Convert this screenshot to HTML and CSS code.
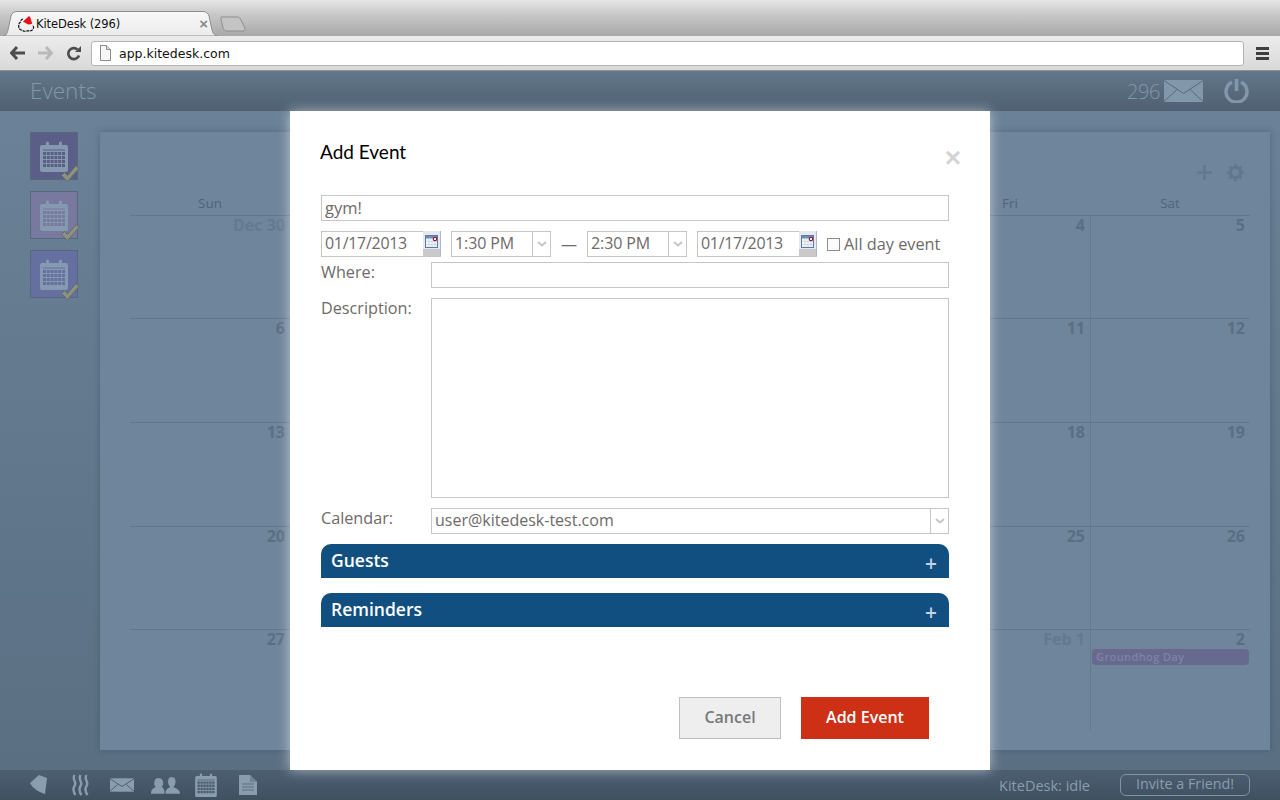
FILE: index.html
```html
<!DOCTYPE html>
<html lang="en">
<head>
<meta charset="utf-8">
<title>KiteDesk (296)</title>
<link rel="stylesheet" href="styles.css">
</head>
<body>
<svg class="defs" width="0" height="0" aria-hidden="true">
  <symbol id="cal" viewBox="0 0 28 31">
    <path d="M2 4h4V2a1.500 1.500 0 0 1 3 0v2h10V2a1.500 1.500 0 0 1 3 0v2h4a2 2 0 0 1 2 2v23a2 2 0 0 1-2 2H2a2 2 0 0 1-2-2V6a2 2 0 0 1 2-2z" fill="currentColor"/>
    <path d="M3 9h22" stroke="var(--cell)" stroke-width="1"/>
    <path d="M3 12.500h22M3 16.500h22M3 20.500h22M3 24.500h22" stroke="var(--cell)" stroke-width="3" stroke-dasharray="3 .8"/>
  </symbol>
  <symbol id="chk" viewBox="0 0 20 20">
    <path d="M1.500 12.500l3-3 3 3L16 2.500l3 3L7.500 18.500z" fill="#8f9279" stroke="#5a6b7c" stroke-width="1"/>
  </symbol>
  <symbol id="chev" viewBox="0 0 10 6">
    <path d="M1 1l4 3.500L9 1" fill="none" stroke="#c4c4c4" stroke-width="1.800"/>
  </symbol>
  <symbol id="pick" viewBox="0 0 18 25">
    <rect width="18" height="25" fill="#c9c9cb"/>
    <rect width="17" height="18" fill="#e6e9f0"/>
    <rect x="17" width="1" height="25" fill="#a9b6cc"/>
    <rect x="2.500" y="4.500" width="12" height="12" fill="#f3f5f9" stroke="#5c7aa6"/>
    <rect x="3" y="5" width="11" height="2.500" fill="#6f8db8"/>
    <path d="M6 8v8M9 8v8M12 8v8M3 10.500h11M3 13.500h11" stroke="#c9d2e0" stroke-width=".7"/>
    <circle cx="12" cy="8" r="1.700" fill="#fff" stroke="#8b1020" stroke-width="1.100"/>
  </symbol>
</svg>

<header class="tabstrip">
  <div class="tab">
    <svg class="tab-shape" width="216" height="25" viewBox="0 0 216 25"><path d="M0 25c3 0 4-2 5-6l3-14c1-3 3-4.500 6-4.500h186c3 0 5 1.500 6 4.500l3 14c1 4 3 6 6 6z" fill="url(#tabfill)" stroke="#8f8f8f"/><defs><linearGradient id="tabfill" x1="0" y1="0" x2="0" y2="1"><stop offset="0" stop-color="#f7f7f7"/><stop offset="1" stop-color="#ececec"/></linearGradient></defs></svg>
    <svg class="favicon" width="17" height="16" viewBox="0 0 17 16"><path d="M5 3C3 3.500 2.500 5 2.500 6 1 7 .5 8.500 .8 10c-.3 2 1 4 3 4.200 2 1.300 4 1.300 6 .5 2 .5 4 .2 5.200-1.500 1-1.500.7-3-.3-4" fill="none" stroke="#111" stroke-width="1.200" stroke-dasharray="3 .8"/><path d="M5 5.500L11 0c1.500 1 2.500 4 3 8l-4 .5z" fill="#e8101c"/></svg>
    <span class="tab-title">KiteDesk (296)</span>
    <span class="tab-close">×</span>
  </div>
  <svg class="newtab" width="26" height="16" viewBox="0 0 26 16"><path d="M1 1h16c2 0 3 1 4 3l4 8c.5 2-.5 3-2 3H7c-2 0-3-1-4-3L1 3c-.500-1 0-2 0-2z" fill="#c4c4c4" stroke="#8f8f8f"/></svg>
</header>

<nav class="toolbar">
  <svg class="nav-ico" width="15" height="14" viewBox="0 0 15 14"><path d="M7 1L1.500 7 7 13M2 7h13" fill="none" stroke="#4c4c4c" stroke-width="3"/></svg>
  <svg class="nav-ico" width="15" height="14" viewBox="0 0 15 14"><path d="M8 1l5.500 6L8 13M13 7H0" fill="none" stroke="#b9b9b9" stroke-width="3"/></svg>
  <svg class="nav-ico reload" width="16" height="15" viewBox="0 0 15 15"><path d="M12.500 9.500A5.500 5.500 0 1 1 11 3.500" fill="none" stroke="#4c4c4c" stroke-width="2.600"/><path d="M8.500 6h6V0z" fill="#4c4c4c"/></svg>
  <div class="omnibox">
    <svg width="11" height="16" viewBox="0 0 11 16"><path d="M.5.500h6l4 4v11H.500z" fill="#f6f6f6" stroke="#8a8a8a"/><path d="M6.500.500v4h4" fill="#ddd" stroke="#8a8a8a"/></svg>
    <span class="url">app.kitedesk.com</span>
  </div>
  <div class="menu"><i></i><i></i><i></i></div>
</nav>

<header class="apphead">
  <h1 class="apptitle">Events</h1>
  <div class="counts">
    <span class="count">296</span>
    <svg width="39" height="22" viewBox="0 0 39 22"><path d="M0 0h39v22H0z" fill="#8297aa"/><path d="M0 .5l19.500 13L39 .5M0 21.500l13-12M39 21.500l-13-12" fill="none" stroke="#566b7e" stroke-width="1"/></svg>
    <svg class="power" width="25" height="25" viewBox="0 0 25 25"><path d="M8 4.200a10.500 10.500 0 1 0 9 0" fill="none" stroke="#8297aa" stroke-width="3.500"/><path d="M12.500 1v12" stroke="#8297aa" stroke-width="3.600"/></svg>
  </div>
</header>

<main class="main">
  <aside class="side">
    <div class="tile t1"><svg class="tile-cal" width="28" height="31"><use href="#cal"/></svg><svg class="tile-chk" width="20" height="20"><use href="#chk"/></svg></div>
    <div class="tile t2"><svg class="tile-cal" width="28" height="31"><use href="#cal"/></svg><svg class="tile-chk" width="20" height="20"><use href="#chk"/></svg></div>
    <div class="tile t3"><svg class="tile-cal" width="28" height="31"><use href="#cal"/></svg><svg class="tile-chk" width="20" height="20"><use href="#chk"/></svg></div>
  </aside>
  <section class="card">
    <div class="card-tools">
      <svg width="15" height="15" viewBox="0 0 16 16"><path d="M8 0v16M0 8h16" stroke="#62778c" stroke-width="2.400"/></svg>
      <svg width="17" height="17" viewBox="0 0 17 17"><circle cx="8.500" cy="8.500" r="5" fill="none" stroke="#62778c" stroke-width="3.200"/><path d="M8.500 0v17M0 8.500h17M2.500 2.500l12 12M14.500 2.500l-12 12" stroke="#62778c" stroke-width="2.600" stroke-dasharray="3 11"/></svg>
    </div>
    <div class="cal">
      <div class="dow">Sun</div><div class="dow"></div><div class="dow"></div><div class="dow"></div><div class="dow"></div><div class="dow">Fri</div><div class="dow">Sat</div>
      <div class="day off">Dec 30</div><div class="day"></div><div class="day"></div><div class="day"></div><div class="day"></div><div class="day">4</div><div class="day sat">5</div>
      <div class="day">6</div><div class="day"></div><div class="day"></div><div class="day"></div><div class="day"></div><div class="day">11</div><div class="day sat">12</div>
      <div class="day">13</div><div class="day"></div><div class="day"></div><div class="day"></div><div class="day"></div><div class="day">18</div><div class="day sat">19</div>
      <div class="day">20</div><div class="day"></div><div class="day"></div><div class="day"></div><div class="day"></div><div class="day">25</div><div class="day sat">26</div>
      <div class="day last">27</div><div class="day last"></div><div class="day last"></div><div class="day last"></div><div class="day last"></div><div class="day last off">Feb 1</div><div class="day last sat">2<div class="evt">Groundhog Day</div></div>
    </div>
  </section>
</main>

<footer class="appfoot">
  <div class="foot-icons">
    <svg width="18" height="20" viewBox="0 0 18 20"><path d="M0 8L9 0l8 3-2 16C9 17 3 14 0 8z" fill="#8a9dae"/></svg>
    <svg class="waves" width="18" height="22" viewBox="0 0 18 22"><path d="M2.500 1c-3 5 3 7 0 11-2 3-1 6 1 9M8.500 1c-3 5 3 7 0 11-2 3-1 6 1 9M14.500 1c-3 5 3 7 0 11-2 3-1 6 1 9" fill="none" stroke="#8a9dae" stroke-width="2.400"/></svg>
    <svg class="f-mail" width="24" height="14" viewBox="0 0 25 14"><path d="M0 0h25v14H0z" fill="#8a9dae"/><path d="M0 .5l12.500 8L25 .5M0 13.500l8-7M25 13.500l-8-7" fill="none" stroke="#4a5d6e"/></svg>
    <svg class="f-ppl" width="29" height="20" viewBox="0 0 30 20"><path d="M0 19c0-5 3-6 5-7-2-2-2-3-1-7 1-3 6-3 8 0 1 3 1 5-1 7 2 1 3 2 3 7z" fill="#8a9dae"/><path d="M15 19c0-4 1-5 5-7-2-2-3-4-2-8 1-3 6-3 7 0 1 4 0 6-2 8 4 2 7 3 7 7z" fill="#8a9dae"/></svg>
    <svg class="f-cal" width="22" height="24"><use href="#cal"/></svg>
    <svg class="f-doc" width="18" height="20" viewBox="0 0 18 20"><path d="M0 0h11l7 7v13H0z" fill="#8a9dae"/><path d="M11 0v7h7" fill="#6f8497"/><path d="M3 9h12M3 12h12M3 15h12" stroke="#5a6d7f"/></svg>
  </div>
  <span class="status">KiteDesk: idle</span>
  <span class="invite">Invite a Friend!</span>
</footer>

<div class="modal">
  <div class="modal-head">
    <h2 class="modal-title">Add Event</h2>
    <span class="modal-x">×</span>
  </div>
  <div class="field title-field">gym!</div>
  <div class="when">
    <div class="field date">01/17/2013<svg class="pick" width="18" height="25"><use href="#pick"/></svg></div>
    <div class="field time">1:30 PM<span class="arrow"><svg width="10" height="6"><use href="#chev"/></svg></span></div>
    <span class="dash">—</span>
    <div class="field time">2:30 PM<span class="arrow"><svg width="10" height="6"><use href="#chev"/></svg></span></div>
    <div class="field date">01/17/2013<svg class="pick" width="18" height="25"><use href="#pick"/></svg></div>
    <span class="check"></span>
    <span class="allday">All day event</span>
  </div>
  <div class="row where"><span class="lbl">Where:</span><div class="field grow"></div></div>
  <div class="row desc"><span class="lbl">Description:</span><div class="field grow area"></div></div>
  <div class="row calrow"><span class="lbl">Calendar:</span><div class="field grow">user@kitedesk-test.com<span class="arrow"><svg width="10" height="6"><use href="#chev"/></svg></span></div></div>
  <div class="bar">Guests<span class="plus">+</span></div>
  <div class="bar">Reminders<span class="plus">+</span></div>
  <div class="actions">
    <button class="btn cancel">Cancel</button>
    <button class="btn add">Add Event</button>
  </div>
</div>
</body>
</html>
```
FILE: styles.css
```css
* { box-sizing: border-box; }
html, body { margin: 0; height: 800px; overflow: hidden; }
body { display: flex; flex-direction: column; font-family: "Open Sans", "Noto Sans", sans-serif; background: #5c7185; }
.defs { position: absolute; }

.tabstrip { height: 36px; flex: none; display: flex; align-items: flex-end; padding-left: 3px; gap: 2px; background: linear-gradient(#e6e6e6, #c8c8c8 40%, #a8a8a8); }
.tab { width: 216px; height: 25px; position: relative; display: flex; align-items: center; padding: 0 11px 0 15px; }
.tab-shape { position: absolute; left: 0; top: 0; }
.favicon { flex: none; position: relative; }
.tab-title { position: relative; font: 11.500px "DejaVu Sans", sans-serif; letter-spacing: -.1px; color: #111; margin-left: 1px; flex: 1; }
.tab-close { position: relative; font: bold 15px "Liberation Sans", sans-serif; color: #8a8a8a; }
.newtab { margin-bottom: 4px; margin-left: -1px; }

.toolbar { height: 35px; flex: none; display: flex; align-items: center; padding: 0 11px 0 10px; background: linear-gradient(#ececec, #d9d9d9); border-bottom: 1px solid #8f9296; }
.nav-ico { flex: none; margin-right: 13px; }
.reload { margin-right: 9px; }
.omnibox { flex: 1; height: 25px; display: flex; align-items: center; gap: 8px; padding-left: 8px; background: #fff; border: 1px solid #b4b4b4; border-radius: 3px; }
.url { font: 12.500px "DejaVu Sans", sans-serif; color: #111; }
.menu { width: 13px; margin-left: 12px; display: flex; flex-direction: column; gap: 2px; }
.menu i { height: 3px; background: #3f3f3f; }

.apphead { height: 40px; flex: none; display: flex; align-items: center; justify-content: space-between; padding: 0 31px 0 30px; background: linear-gradient(#62778a, #4e6071); }
.apptitle { margin: -2px 0 0; font: 300 22.500px "Open Sans", sans-serif; color: #8297aa; }
.counts { display: flex; align-items: center; }
.count { font: 300 20px "Open Sans", sans-serif; letter-spacing: -.4px; color: #8297aa; margin-right: 4px; }
.power { margin-left: 21px; margin-top: -2px; }

.main { flex: 1; min-height: 0; display: flex; gap: 22px; padding: 21px 10px 20px 30px; background: linear-gradient(#6a8197, #5a6f82); }
.side { width: 48px; flex: none; display: flex; flex-direction: column; gap: 11px; }
.tile { width: 48px; height: 48px; position: relative; border: 1px solid #55687e; color: #8599b0; display: flex; justify-content: center; padding-top: 8px; }
.t1 { background: #5b5f87; --cell: #5b5f87; }
.t2 { background: #79799f; --cell: #79799f; }
.t3 { background: #656fa0; --cell: #656fa0; }
.tile-chk { position: absolute; right: -3px; bottom: -4px; }

.card { flex: 1; display: flex; flex-direction: column; padding: 0 20px 20px 30px; background: #6f859b; box-shadow: 0 0 6px rgba(50, 70, 90, .45); }
.card-tools { height: 47px; flex: none; display: flex; justify-content: flex-end; align-items: center; gap: 15px; padding: 2px 6px 0 0; margin-top: 16px; }
.cal { flex: 1; display: grid; grid-template-columns: repeat(7, 160px); grid-template-rows: 21px 103px 104px 104px 103px 100px; }
.dow { font-size: 13.500px; line-height: 16px; text-align: center; color: #4f6479; border-bottom: 1px solid #60768c; }
.day { padding: 0 5px 0 0; text-align: right; font-size: 16px; font-weight: 700; line-height: 19px; color: #5a6e83; border-bottom: 1px solid #60768c; }
.off { color: #63798f; }
.sat { border-left: 1px solid #64798e; }
.last { border-bottom: 0; }
.evt { margin: 0 -4px 0 1px; height: 16px; padding-left: 4px; text-align: left; font-size: 11px; font-weight: 600; line-height: 16px; letter-spacing: .4px; color: #7d84a5; background: #67698f; border-radius: 4px; }

.appfoot { height: 30px; flex: none; display: flex; align-items: center; padding: 0 30px; background: linear-gradient(#4c5f71, #3f5061); }
.foot-icons { display: flex; align-items: center; gap: 24px; flex: 1; color: #8a9dae; --cell: #4a5d6e; }
.f-mail { margin-left: -4px; }
.f-ppl { margin-left: -7px; }
.f-cal { margin-left: -9px; }
.f-doc { margin-left: -2px; }
.status { font-size: 14.500px; color: #8a9dae; margin-right: 30px; }
.invite { width: 130px; height: 22px; text-align: center; font-size: 14.300px; line-height: 18px; color: #8a9dae; border: 1px solid #8094a6; border-radius: 6px; }

.modal { position: absolute; left: 290px; top: 111px; width: 700px; height: 659px; padding: 0 41px 0 31px; background: #fff; box-shadow: 0 0 12px rgba(255, 255, 255, .55); }
.modal-head { height: 84px; display: flex; justify-content: space-between; align-items: flex-start; }
.modal-title { margin: 30px 0 0 -1px; font: 400 19px/22px "Lato", sans-serif; color: #000; }
.modal-x { margin: 29px -12px 0 0; font: bold 28px/36px "Liberation Sans", sans-serif; color: #d4d4d4; }

.field { height: 26px; position: relative; padding: 0 3px; font-size: 16px; font-weight: 500; line-height: 23px; color: #6e6a6a; border: 1px solid #c6c6c6; background: #fff; white-space: nowrap; }
.title-field { font-size: 16.500px; }
.when { display: flex; align-items: center; margin-top: 10px; }
.date { width: 120px; letter-spacing: -.3px; }
.pick { position: absolute; right: -1px; top: -1px; }
.time { width: 100px; margin-left: 10px; letter-spacing: -.1px; }
.time + .date { margin-left: 10px; }
.arrow { position: absolute; right: 0; top: 0; bottom: 0; width: 18px; display: flex; align-items: center; justify-content: center; border-left: 1px solid #c6c6c6; }
.dash { width: 36px; text-align: center; margin-right: -10px; font-size: 16px; color: #6e6a6a; }
.check { width: 13px; height: 13px; margin-left: 10px; border: 1px solid #8d8d8d; background: #fbfbfb; }
.allday { margin-left: 4px; font-size: 16.300px; font-weight: 500; color: #6e6a6a; white-space: nowrap; }
.row { display: flex; margin-top: 10px; }
.where { margin-top: 5px; }
.lbl { width: 110px; flex: none; font-size: 16.200px; font-weight: 500; line-height: 21px; color: #6e6a6a; }
.grow { flex: 1; }
.area { height: 200px; }
.bar { height: 34px; margin-top: 10px; position: relative; padding-left: 10px; font-size: 17.500px; font-weight: 600; line-height: 33px; color: #fff; background: #114f80; border-radius: 10px 10px 0 0; }
.bar + .bar { margin-top: 15px; }
.plus { position: absolute; right: 12px; top: 3px; font-size: 21px; font-weight: 600; color: #c3d2e4; }
.actions { display: flex; justify-content: flex-end; gap: 20px; margin-top: 70px; padding-right: 20px; }
.btn { height: 42px; font-family: "Open Sans", sans-serif; font-size: 16px; font-weight: 600; padding: 0 0 2px; }
.cancel { width: 102px; color: #787878; background: #eeeeee; border: 1px solid #c0c0c0; }
.add { width: 128px; color: #fff; background: #cd3015; border: 0; }
```
